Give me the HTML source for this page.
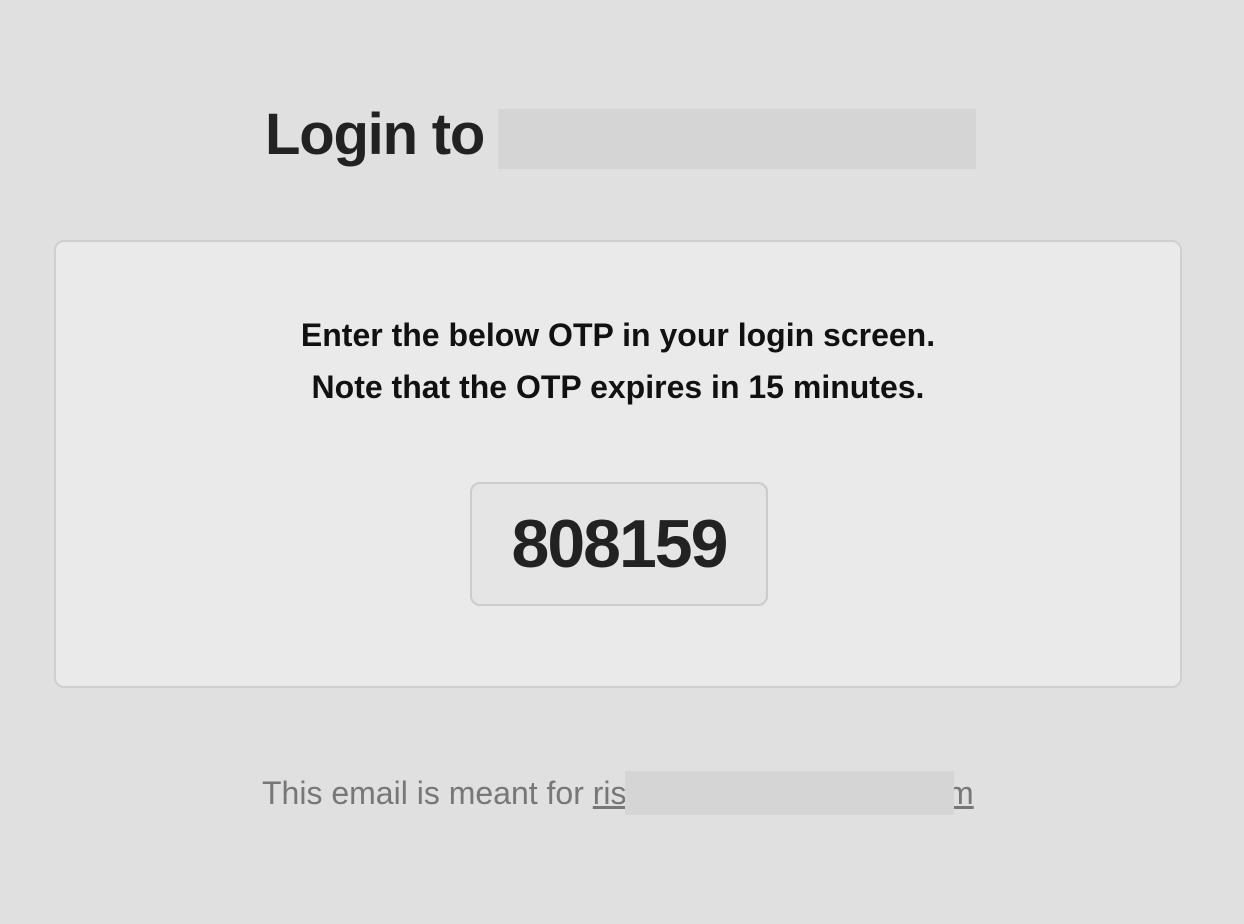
<!DOCTYPE html>
<html><head><meta charset="utf-8"><style>
body{margin:0;width:1244px;height:924px;background:#e0e0e0;font-family:"Liberation Sans",Arial,sans-serif;position:relative;overflow:hidden}
.a{position:absolute}
</style></head><body>
<div class="a" style="left:265px;top:101px;font-size:58px;font-weight:bold;color:#222;letter-spacing:-1.2px;white-space:nowrap">Login to</div>
<div class="a" style="left:498px;top:109px;width:478px;height:60px;background:#d5d5d5"></div>
<div class="a" style="left:54px;top:240px;width:1124px;height:444px;border:2px solid #cfcfcf;border-radius:10px;background:#eaeaea"></div>
<div class="a" style="left:54px;width:1128px;top:309px;text-align:center;font-size:32px;font-weight:bold;color:#111;line-height:52px">Enter the below OTP in your login screen.<br>Note that the OTP expires in 15 minutes.</div>
<div class="a" style="left:470px;top:482px;width:294px;height:120px;border:2px solid #cbcbcb;border-radius:10px;background:#e5e5e5;text-align:center;line-height:120px;font-size:68px;font-weight:bold;color:#222;letter-spacing:-2px">808159</div>
<div class="a" style="left:262px;top:774px;font-size:32px;color:#777;white-space:nowrap;line-height:38px;letter-spacing:0px">This email is meant for <u>ris</u></div>
<div class="a" style="left:947px;top:774px;font-size:32px;color:#777;white-space:nowrap;line-height:38px"><u>m</u></div>
<div class="a" style="left:625px;top:771px;width:329px;height:44px;background:#d5d5d5"></div>
</body></html>
